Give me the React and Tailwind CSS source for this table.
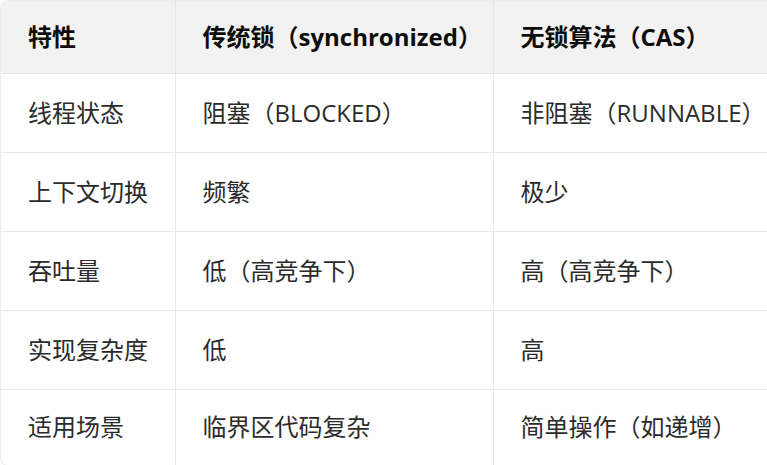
import React from 'react';

const rows = [
  ['线程状态', '阻塞（BLOCKED）', '非阻塞（RUNNABLE）'],
  ['上下文切换', '频繁', '极少'],
  ['吞吐量', '低（高竞争下）', '高（高竞争下）'],
  ['实现复杂度', '低', '高'],
  ['适用场景', '临界区代码复杂', '简单操作（如递增）'],
];

const font = { fontFamily: '"Open Sans", "Noto Sans CJK SC", sans-serif' };

export default function App() {
  return (
    <div className="w-[767px] h-[465px] overflow-hidden bg-white" style={font}>
      <div className="w-[820px] rounded-lg border border-[#ececec] overflow-hidden">
        <table className="w-full border-collapse text-[24px] leading-none">
          <thead>
            <tr className="h-[72px] bg-[#f2f2f2]">
              <th className="w-[174px] pl-[27px] text-left font-bold text-[#0d0d0d] border-r border-[#e3e3e3]">特性</th>
              <th className="w-[318px] pl-[27px] text-left font-bold text-[#0d0d0d] border-r border-[#e3e3e3]">传统锁（synchronized）</th>
              <th className="pl-[27px] text-left font-bold text-[#0d0d0d]">无锁算法（CAS）</th>
            </tr>
          </thead>
          <tbody>
            {rows.map((r, i) => (
              <tr key={i} className={i === rows.length - 1 ? 'h-[76px] border-t border-[#e8e8e8]' : 'h-[79px] border-t border-[#e8e8e8]'}>
                <td className="pl-[27px] text-[#2b2b2b] border-r border-[#e8e8e8] whitespace-nowrap">{r[0]}</td>
                <td className="pl-[27px] text-[#2b2b2b] border-r border-[#e8e8e8] whitespace-nowrap">{r[1]}</td>
                <td className="pl-[27px] text-[#2b2b2b] whitespace-nowrap">{r[2]}</td>
              </tr>
            ))}
          </tbody>
        </table>
      </div>
    </div>
  );
}
